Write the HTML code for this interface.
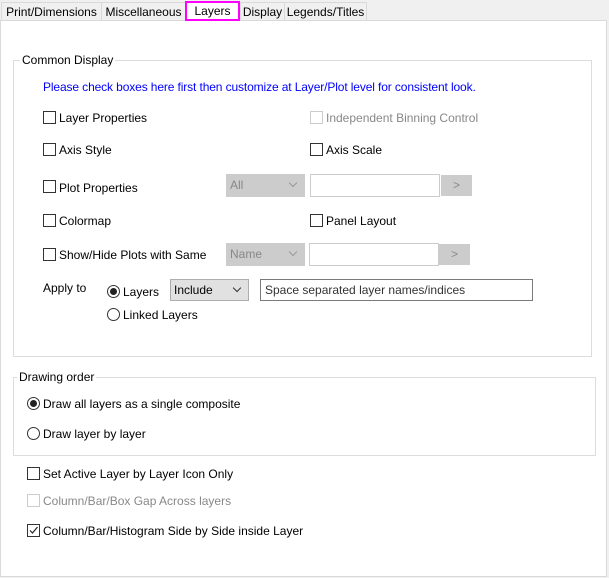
<!DOCTYPE html>
<html><head><meta charset="utf-8"><style>
body{margin:0;width:609px;height:578px;background:#f0f0f0;font-family:"Liberation Sans",sans-serif;font-size:12px;color:#000;position:relative;overflow:hidden}
.a{position:absolute;white-space:nowrap}
.tab{position:absolute;top:2px;height:18px;border:1px solid #d9d9d9;border-bottom:none;background:#f0f0f0;line-height:18px;text-align:center;box-sizing:border-box}
.panel{position:absolute;left:0;top:20px;width:607px;height:557px;background:#fff;border:1px solid #d9d9d9;box-sizing:border-box}
.grp{position:absolute;border:1px solid #dcdcdc;box-sizing:border-box}
.cb{position:absolute;width:13px;height:13px;border:1px solid #333;box-sizing:border-box;background:#fff}
.cb.d{border-color:#ccc}
.rb{position:absolute;width:13px;height:13px;border:1px solid #333;border-radius:50%;box-sizing:border-box;background:#fff}
.rb.on::after{content:"";position:absolute;left:2px;top:2px;width:7px;height:7px;border-radius:50%;background:#222}
.sel{position:absolute;background:#ccc;border:1px solid #ccc;box-sizing:border-box;color:#888;padding-left:3px;line-height:20px}
.sel::after{content:"";position:absolute;right:8px;top:5px;width:5px;height:5px;border-right:1px solid #999;border-bottom:1px solid #999;transform:rotate(45deg)}
.tb{position:absolute;border:1px solid #ccc;background:#fff;box-sizing:border-box}
.btn{position:absolute;background:#ccc;border:1px solid #ccc;box-sizing:border-box;color:#888;text-align:center;line-height:19px}
</style></head><body>
<div class="panel"></div>
<div class="tab" style="left:1px;width:101px">Print/Dimensions</div>
<div class="tab" style="left:101px;width:85px">Miscellaneous</div>
<div class="tab" style="left:240px;width:45px">Display</div>
<div class="tab" style="left:284px;width:83px">Legends/Titles</div>
<div class="a" style="left:185px;top:1px;width:55px;height:20px;background:#fff;border:2px solid #f0f;box-sizing:border-box;text-align:center;line-height:16px">Layers</div>

<div class="grp" style="left:13px;top:60px;width:579px;height:297px"></div>
<div class="a" style="left:20px;top:52px;background:#fff;padding:0 2px;line-height:16px">Common Display</div>
<div class="a" style="left:43px;top:80px;color:#0000ff;letter-spacing:-0.12px">Please check boxes here first then customize at Layer/Plot level for consistent look.</div>

<div class="cb" style="left:43px;top:111px"></div><div class="a" style="left:59px;top:111px">Layer Properties</div>
<div class="cb d" style="left:310px;top:111px"></div><div class="a" style="left:326px;top:111px;color:#888">Independent Binning Control</div>
<div class="cb" style="left:43px;top:143px"></div><div class="a" style="left:59px;top:143px">Axis Style</div>
<div class="cb" style="left:310px;top:143px"></div><div class="a" style="left:326px;top:143px">Axis Scale</div>
<div class="cb" style="left:43px;top:180px"></div><div class="a" style="left:59px;top:181px">Plot Properties</div>
<div class="sel" style="left:226px;top:174px;width:79px;height:23px">All</div>
<div class="tb" style="left:310px;top:174px;width:130px;height:23px"></div>
<div class="btn" style="left:441px;top:175px;width:31px;height:21px">&gt;</div>
<div class="cb" style="left:43px;top:214px"></div><div class="a" style="left:59px;top:214px">Colormap</div>
<div class="cb" style="left:310px;top:214px"></div><div class="a" style="left:326px;top:214px">Panel Layout</div>
<div class="cb" style="left:43px;top:248px"></div><div class="a" style="left:59px;top:248px">Show/Hide Plots with Same</div>
<div class="sel" style="left:226px;top:243px;width:79px;height:23px">Name</div>
<div class="tb" style="left:309px;top:243px;width:130px;height:23px"></div>
<div class="btn" style="left:439px;top:244px;width:31px;height:21px">&gt;</div>
<div class="a" style="left:43px;top:281px">Apply to</div>
<div class="rb on" style="left:107px;top:285px"></div><div class="a" style="left:123px;top:285px">Layers</div>
<div class="a" style="left:170px;top:279px;width:79px;height:22px;border:1px solid #adadad;background:#e1e1e1;box-sizing:border-box;padding-left:3px;line-height:20px">Include<span style="position:absolute;right:8px;top:5px;width:5px;height:5px;border-right:1px solid #333;border-bottom:1px solid #333;transform:rotate(45deg)"></span></div>
<div class="a" style="left:260px;top:279px;width:273px;height:22px;border:1px solid #7a7a7a;box-sizing:border-box;padding-left:4px;line-height:20px;color:#333;background:#fff">Space separated layer names/indices</div>
<div class="rb" style="left:107px;top:308px"></div><div class="a" style="left:123px;top:308px">Linked Layers</div>

<div class="grp" style="left:13px;top:377px;width:583px;height:79px"></div>
<div class="a" style="left:17px;top:369px;background:#fff;padding:0 2px;line-height:16px">Drawing order</div>
<div class="rb on" style="left:27px;top:397px"></div><div class="a" style="left:43px;top:397px">Draw all layers as a single composite</div>
<div class="rb" style="left:27px;top:427px"></div><div class="a" style="left:43px;top:427px">Draw layer by layer</div>

<div class="cb" style="left:27px;top:467px"></div><div class="a" style="left:43px;top:467px">Set Active Layer by Layer Icon Only</div>
<div class="cb d" style="left:27px;top:494px"></div><div class="a" style="left:43px;top:494px;color:#888">Column/Bar/Box Gap Across layers</div>
<div class="cb" style="left:27px;top:524px"><svg width="11" height="11" style="position:absolute;left:0;top:0"><path d="M2 5.5 L4.5 8 L9.5 2" stroke="#222" stroke-width="1.2" fill="none"/></svg></div><div class="a" style="left:43px;top:524px">Column/Bar/Histogram Side by Side inside Layer</div>
</body></html>
